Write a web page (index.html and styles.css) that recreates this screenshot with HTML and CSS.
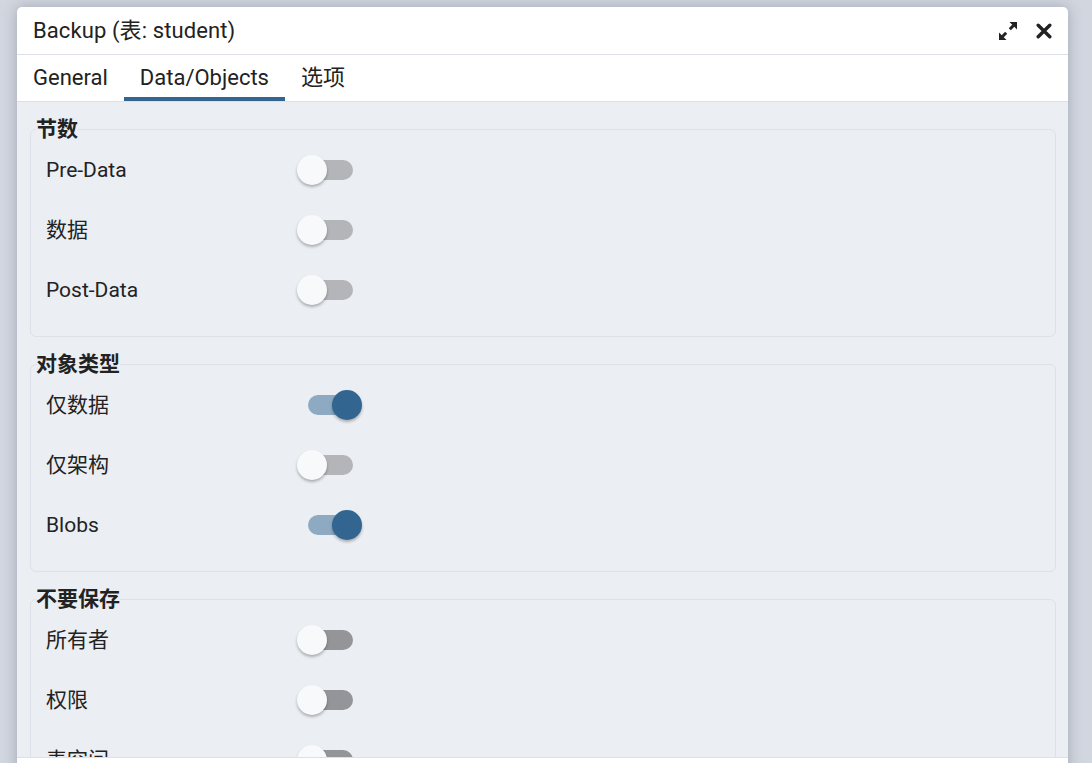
FILE: index.html
```html
<!DOCTYPE html>
<html lang="zh">
<head>
<meta charset="utf-8">
<title>Backup</title>
<link rel="stylesheet" href="styles.css">
</head>
<body>
<div class="dialog">
  <div class="dlg-header">
    <div class="dlg-title">Backup (表: student)</div>
    <div class="dlg-actions">
      <span class="icon-btn">
        <svg width="20" height="20" viewBox="0 0 20 20">
          <polygon points="11.5,1 19,1 19,8.5" fill="#222"/>
          <polygon points="1,11.5 1,19 8.5,19" fill="#222"/>
          <line x1="15.5" y1="4.5" x2="11.8" y2="8.2" stroke="#222" stroke-width="3"/>
          <line x1="4.5" y1="15.5" x2="8.2" y2="11.8" stroke="#222" stroke-width="3"/>
        </svg>
      </span>
      <span class="icon-btn">
        <svg width="16" height="16" viewBox="0 0 16 16">
          <path d="M2.2 2.2 L13.8 13.8 M13.8 2.2 L2.2 13.8" stroke="#222" stroke-width="3.4" stroke-linecap="round"/>
        </svg>
      </span>
    </div>
  </div>
  <div class="tabs">
    <div class="tab">General</div>
    <div class="tab active">Data/Objects</div>
    <div class="tab">选项</div>
  </div>
  <div class="content">
    <fieldset class="group">
      <legend>节数</legend>
      <div class="row"><span class="label">Pre-Data</span><span class="switch"><span class="track"></span><span class="thumb"></span></span></div>
      <div class="row"><span class="label">数据</span><span class="switch"><span class="track"></span><span class="thumb"></span></span></div>
      <div class="row"><span class="label">Post-Data</span><span class="switch"><span class="track"></span><span class="thumb"></span></span></div>
    </fieldset>
    <fieldset class="group">
      <legend>对象类型</legend>
      <div class="row"><span class="label">仅数据</span><span class="switch on"><span class="track"></span><span class="thumb"></span></span></div>
      <div class="row"><span class="label">仅架构</span><span class="switch"><span class="track"></span><span class="thumb"></span></span></div>
      <div class="row"><span class="label">Blobs</span><span class="switch on"><span class="track"></span><span class="thumb"></span></span></div>
    </fieldset>
    <fieldset class="group dark">
      <legend>不要保存</legend>
      <div class="row"><span class="label">所有者</span><span class="switch"><span class="track"></span><span class="thumb"></span></span></div>
      <div class="row"><span class="label">权限</span><span class="switch"><span class="track"></span><span class="thumb"></span></span></div>
      <div class="row"><span class="label">表空间</span><span class="switch"><span class="track"></span><span class="thumb"></span></span></div>
      <div class="row"><span class="label">未记录的表数据</span><span class="switch"><span class="track"></span><span class="thumb"></span></span></div>
    </fieldset>
  </div>
  <div class="footer"></div>
</div>
</body>
</html>
```
FILE: styles.css
```css
html, body {
  margin: 0;
  height: 100%;
}
body {
  background: #d2d6df;
  padding: 7px 0 0 17px;
  box-sizing: border-box;
  overflow: hidden;
  font-family: Roboto, "Noto Sans CJK SC", sans-serif;
  color: #222;
}
.dialog {
  width: 1051px;
  height: 820px;
  background: #fff;
  border-radius: 5px 5px 0 0;
  box-shadow: 0 0 14px rgba(70, 80, 100, 0.35);
  display: flex;
  flex-direction: column;
  overflow: hidden;
}
.dlg-header {
  height: 47px;
  border-bottom: 1px solid #dde0e6;
  display: flex;
  align-items: center;
  justify-content: space-between;
  padding: 0 14px 0 16px;
  flex-shrink: 0;
}
.dlg-title {
  font-size: 22px;
  line-height: 24px;
  letter-spacing: 0.1px;
}
.dlg-actions {
  display: flex;
  align-items: center;
  gap: 16px;
}
.icon-btn {
  display: flex;
  align-items: center;
  justify-content: center;
  width: 20px;
  height: 20px;
}
.tabs {
  height: 46px;
  border-bottom: 1px solid #dde0e6;
  display: flex;
  flex-shrink: 0;
}
.tab {
  padding: 0 16px;
  font-size: 22px;
  line-height: 46px;
  position: relative;
}
.tab.active::after {
  content: "";
  position: absolute;
  left: 0;
  right: 0;
  bottom: 0;
  height: 4px;
  background: #326690;
}
.content {
  height: 655px;
  background: #ebeef3;
  padding: 16px 12px 0 13px;
  box-sizing: border-box;
  overflow: hidden;
  flex-shrink: 0;
}
.group {
  margin: 0 0 16px 0;
  padding: 0 15px 16px 15px;
  border: 1px solid #dde1e8;
  border-radius: 6px;
}
.group legend {
  padding: 0;
  margin-left: -10px;
  font-size: 21px;
  line-height: 22px;
  font-weight: 700;
}
.row {
  height: 60px;
  display: flex;
  align-items: center;
}
.label {
  width: 251px;
  font-size: 21px;
  line-height: 24px;
}
.switch {
  position: relative;
  width: 66px;
  height: 30px;
}
.track {
  position: absolute;
  left: 11px;
  top: 5px;
  width: 45px;
  height: 20px;
  border-radius: 10px;
  background: #b4b5b9;
}
.dark .track {
  background: #949599;
}
.thumb {
  position: absolute;
  left: 0;
  top: 0;
  width: 30px;
  height: 30px;
  border-radius: 50%;
  background: #f8f9fb;
  box-shadow: 0 2px 3px rgba(0, 0, 0, 0.28);
}
.switch.on .track {
  background: #8eaac2;
}
.switch.on .thumb {
  left: 35px;
  background: #326690;
}
.footer {
  flex: 1;
  border-top: 1px solid #dde0e6;
  background: #fff;
}
```
